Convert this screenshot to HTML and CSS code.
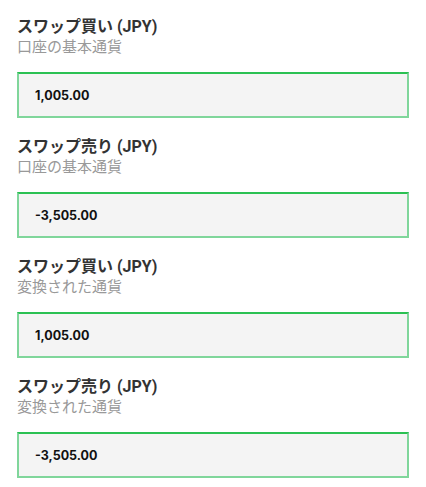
FILE: index.html
```html
<!DOCTYPE html>
<html lang="ja">
<head>
<meta charset="utf-8">
<link rel="stylesheet" href="styles.css">
</head>
<body>
<div class="wrap">
  <div class="field">
    <div class="label">スワップ買い (JPY)</div>
    <div class="sub">口座の基本通貨</div>
    <div class="box">1,005.00</div>
  </div>
  <div class="field">
    <div class="label">スワップ売り (JPY)</div>
    <div class="sub">口座の基本通貨</div>
    <div class="box">-3,505.00</div>
  </div>
  <div class="field">
    <div class="label">スワップ買い (JPY)</div>
    <div class="sub">変換された通貨</div>
    <div class="box">1,005.00</div>
  </div>
  <div class="field">
    <div class="label">スワップ売り (JPY)</div>
    <div class="sub">変換された通貨</div>
    <div class="box">-3,505.00</div>
  </div>
</div>
</body>
</html>
```
FILE: styles.css
```css
html, body {
  margin: 0;
  padding: 0;
  background: #ffffff;
}
.wrap {
  padding: 17px 17px 0 17px;
  width: 392px;
  font-family: "Roboto", "Noto Sans CJK JP", sans-serif;
}
.field {
  display: flex;
  flex-direction: column;
  margin-bottom: 19px;
}
.label {
  font-size: 16px;
  line-height: 20px;
  font-weight: 700;
  color: #333333;
}
.sub {
  font-size: 15px;
  line-height: 20px;
  color: #999999;
}
.box {
  margin-top: 15px;
  height: 46px;
  box-sizing: border-box;
  background: #f4f4f4;
  border: 2px solid #80d69b;
  border-top-color: #2bc153;
  padding-left: 16px;
  display: flex;
  align-items: center;
  font-family: "Inter", "Noto Sans", sans-serif;
  font-size: 12.5px;
  font-weight: 700;
  color: #111111;
}
```
